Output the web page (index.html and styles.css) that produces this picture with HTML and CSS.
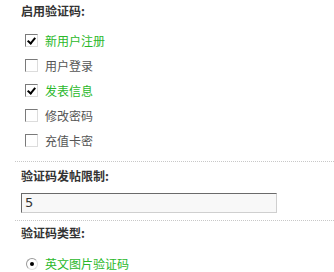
FILE: index.html
```html
<!DOCTYPE html>
<html>
<head>
<meta charset="utf-8">
<link rel="stylesheet" href="styles.css">
</head>
<body>
<div class="panel">
  <div class="section first">
    <div class="heading h1">启用验证码:</div>
    <ul class="opts">
      <li class="opt on"><span class="cb checked"></span><span class="lbl">新用户注册</span></li>
      <li class="opt"><span class="cb"></span><span class="lbl">用户登录</span></li>
      <li class="opt on"><span class="cb checked"></span><span class="lbl">发表信息</span></li>
      <li class="opt"><span class="cb"></span><span class="lbl">修改密码</span></li>
      <li class="opt"><span class="cb"></span><span class="lbl">充值卡密</span></li>
    </ul>
  </div>
  <div class="section second">
    <div class="heading h2">验证码发帖限制:</div>
    <div class="field">5</div>
  </div>
  <div class="section third">
    <div class="heading h3">验证码类型:</div>
    <div class="radio-row"><span class="rb"></span><span class="lbl green">英文图片验证码</span></div>
  </div>
</div>
</body>
</html>
```

FILE: styles.css
```css
html, body {
  margin: 0;
  padding: 0;
  background: #ffffff;
}
body {
  font-family: "Noto Sans CJK SC", "Liberation Sans", sans-serif;
  font-size: 12px;
  color: #555555;
}
.panel {
  width: 334px;
  height: 272px;
  overflow: hidden;
}
.section {
  margin-left: 15px;
  padding-left: 6px;
}
.section.first {
  padding-bottom: 8px;
  border-bottom: 1px dotted #c8c8c8;
}
.section.second {
  padding-bottom: 7px;
  border-bottom: 1px dotted #c8c8c8;
}
.heading {
  font-weight: bold;
  color: #333333;
  font-size: 12px;
}
.h1 {
  height: 22px;
  line-height: 22px;
}
.h2 {
  height: 31px;
  line-height: 28px;
}
.h3 {
  height: 24px;
  line-height: 24px;
}
.opts {
  list-style: none;
  margin: 6px 0 0 0;
  padding: 0;
}
.opt {
  height: 25px;
  display: flex;
  align-items: center;
  padding-left: 4px;
}
.cb {
  width: 13px;
  height: 13px;
  box-sizing: border-box;
  border-top: 1px solid #7a7a7a;
  border-left: 1px solid #7a7a7a;
  border-right: 1px solid #dcdcdc;
  border-bottom: 1px solid #dcdcdc;
  background: #ffffff;
  position: relative;
  flex: none;
}
.cb.checked::after {
  content: "";
  position: absolute;
  left: 3px;
  top: 1px;
  width: 3px;
  height: 6px;
  border-right: 2px solid #000;
  border-bottom: 2px solid #000;
  transform: rotate(40deg);
}
.lbl {
  margin-left: 7px;
  line-height: 14px;
}
.opt.on .lbl, .green {
  color: #2ab82a;
}
.field {
  width: 256px;
  height: 20px;
  box-sizing: border-box;
  border-top: 1px solid #6a6a6a;
  border-left: 1px solid #6a6a6a;
  border-right: 1px solid #cfcfcf;
  border-bottom: 1px solid #cfcfcf;
  background: #f8f8f8;
  color: #333;
  font-family: "DejaVu Sans", "Liberation Sans", sans-serif;
  font-size: 13px;
  line-height: 18px;
  padding-left: 3px;
}
.radio-row {
  margin-top: 7px;
  height: 24px;
  display: flex;
  align-items: center;
  padding-left: 5px;
}
.rb {
  width: 12px;
  height: 12px;
  box-sizing: border-box;
  border-radius: 50%;
  border: 1px solid #9a9a9a;
  border-bottom-color: #e0e0e0;
  border-right-color: #e0e0e0;
  background: #fff;
  position: relative;
  flex: none;
}
.rb::after {
  content: "";
  position: absolute;
  left: 3px;
  top: 3px;
  width: 4px;
  height: 4px;
  border-radius: 50%;
  background: #000;
}
.radio-row .lbl {
  margin-left: 7px;
}
```
